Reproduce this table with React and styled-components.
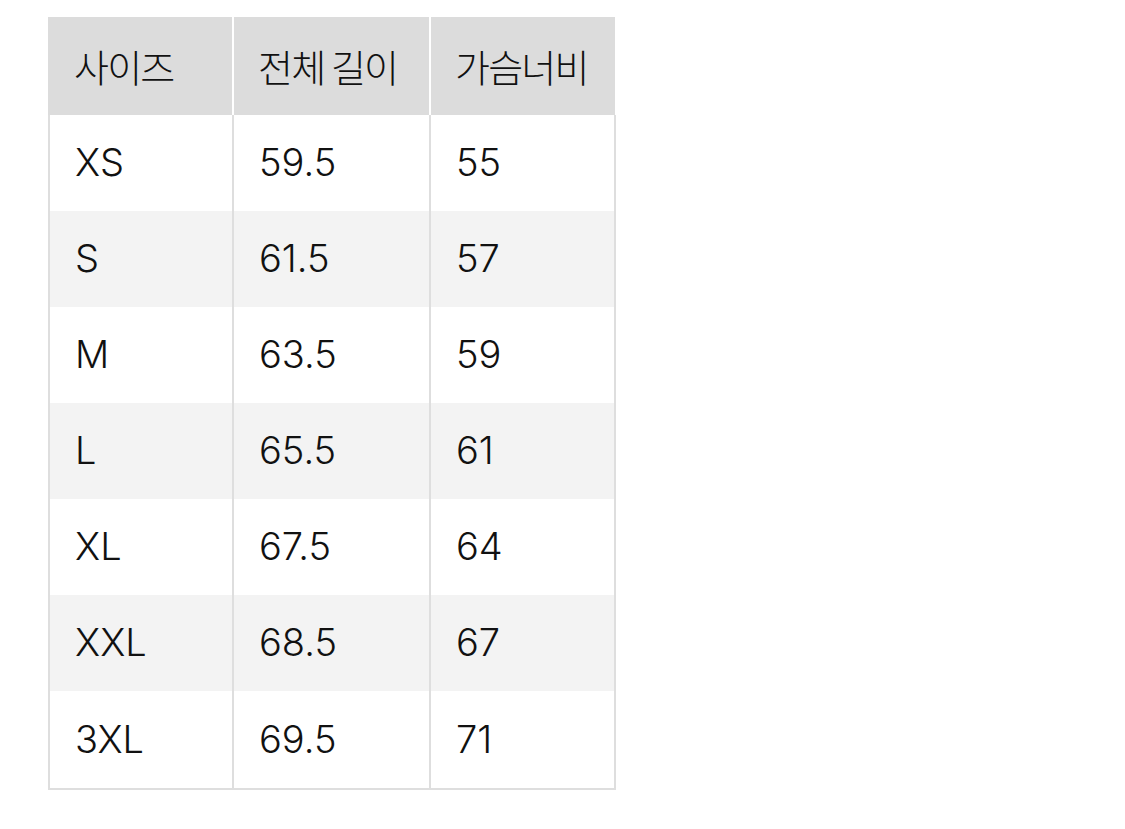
import React from 'react';
import styled, { createGlobalStyle } from 'styled-components';

const GlobalStyle = createGlobalStyle`
  html, body {
    margin: 0;
    padding: 0;
    background: #ffffff;
  }
  body {
    font-family: Inter, "Noto Sans CJK KR", sans-serif;
    color: #111111;
  }
`;

const Page = styled.div`
  width: 1125px;
  height: 829px;
  padding: 17px 0 0 48px;
  box-sizing: border-box;
`;

const Table = styled.table`
  border-collapse: collapse;
  table-layout: fixed;
  width: 566px;
`;

const HeadCell = styled.th`
  height: 98px;
  padding: 0 0 2px 24px;
  box-sizing: border-box;
  background: #dcdcdc;
  border-left: 2px solid #ffffff;
  text-align: left;
  vertical-align: middle;
  font-family: "Noto Sans CJK KR", sans-serif;
  font-weight: 300;
  font-size: 38px;
  letter-spacing: -1.8px;
  color: #111111;

  &:first-child {
    border-left-color: #dcdcdc;
  }
`;

const Row = styled.tr`
  background: ${props => (props.striped ? '#f3f3f3' : '#ffffff')};

  &:last-child td {
    height: 98px;
    border-bottom: 2px solid #dedede;
  }
`;

const Cell = styled.td`
  height: 96px;
  padding: 0 0 2px 25px;
  box-sizing: border-box;
  border-left: 2px solid #dedede;
  border-right: 2px solid #dedede;
  vertical-align: middle;
  font-family: Inter, "Noto Sans CJK KR", sans-serif;
  font-size: 38px;
  font-weight: 300;
  letter-spacing: 0;
  color: #111111;
`;

const rows = [
  ['XS', '59.5', '55'],
  ['S', '61.5', '57'],
  ['M', '63.5', '59'],
  ['L', '65.5', '61'],
  ['XL', '67.5', '64'],
  ['XXL', '68.5', '67'],
  ['3XL', '69.5', '71'],
];

export default function App() {
  return (
    <>
      <GlobalStyle />
      <Page>
        <Table>
          <colgroup>
            <col style={{ width: 184 }} />
            <col style={{ width: 197 }} />
            <col style={{ width: 185 }} />
          </colgroup>
          <thead>
            <tr>
              <HeadCell>사이즈</HeadCell>
              <HeadCell>전체 길이</HeadCell>
              <HeadCell>가슴너비</HeadCell>
            </tr>
          </thead>
          <tbody>
            {rows.map((r, i) => (
              <Row key={r[0]} striped={i % 2 === 1}>
                {r.map(v => (
                  <Cell key={v}>{v}</Cell>
                ))}
              </Row>
            ))}
          </tbody>
        </Table>
      </Page>
    </>
  );
}
